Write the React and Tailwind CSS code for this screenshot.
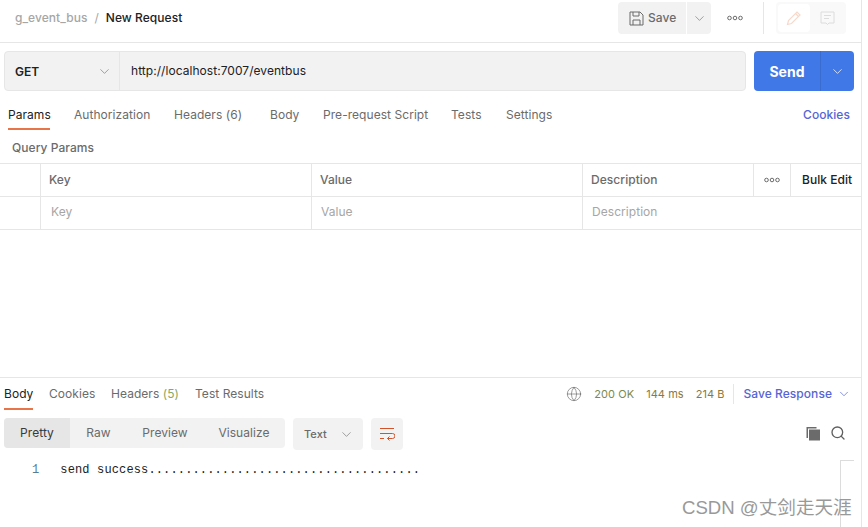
import React from "react";
import { ChevronDown, Globe, Search } from "lucide-react";

const Dots = () => (
  <svg width="16" height="6" viewBox="0 0 16 6" fill="none" stroke="#6b6b6b" strokeWidth="1">
    <circle cx="2.5" cy="3" r="1.8" />
    <circle cx="8" cy="3" r="1.8" />
    <circle cx="13.5" cy="3" r="1.8" />
  </svg>
);

export default function App() {
  const reqTabs = [
    ["Params", "w-[74px] pl-2"],
    ["Authorization", "w-[100px]"],
    ["Headers (6)", "w-[96px]"],
    ["Body", "w-[53px]"],
    ["Pre-request Script", "w-[128px]"],
    ["Tests", "w-[55px]"],
    ["Settings", "w-[60px]"],
  ];

  return (
    <div className="w-[868px] h-[527px] bg-white overflow-hidden font-['Inter',sans-serif] text-[12px] tracking-[0.05px] text-[#6b6b6b] relative">
      <div className="w-[862px] h-full border-r border-[#e6e6e6] flex flex-col">
        {/* top bar */}
        <div className="h-[43px] shrink-0 border-b border-[#e6e6e6] flex items-center pl-[15px] pb-[6px]">
          <span className="text-[#a6a6a6] font-medium">g_event_bus</span>
          <span className="text-[#a6a6a6] ml-[7px]">/</span>
          <span className="text-[#212121] font-medium ml-[7px]">New Request</span>
          <div className="ml-auto flex items-center h-[32px]">
            <div className="w-[68px] h-[32px] bg-[#f2f2f2] rounded-l flex items-center pl-[11px] gap-[4px]">
              <svg width="15" height="15" viewBox="0 0 15 15" fill="none" stroke="#6b6b6b" strokeWidth="1">
                <path d="M1 1h10l3 3v10H1z" />
                <path d="M4 1v4h6V1M4 14V9h7v5" />
              </svg>
              <span className="font-medium text-[#6b6b6b]">Save</span>
            </div>
            <div className="w-[24px] h-[32px] ml-px bg-[#f2f2f2] rounded-r flex items-center justify-center">
              <ChevronDown size={15} strokeWidth={1} color="#6b6b6b" />
            </div>
            <div className="w-[52px] pr-[4px] flex justify-center"><Dots /></div>
            <div className="w-px h-[32px] bg-[#e6e6e6] mr-[12px]"></div>
            <div className="w-[70px] h-[32px] bg-[#f9f9f9] rounded flex items-center p-[2px] mr-[15px]">
              <div className="w-[32px] h-[28px] bg-white rounded flex items-center justify-center">
                <svg width="16" height="16" viewBox="0 0 16 16" fill="none" stroke="#f7d9cc" strokeWidth="1.2">
                  <path d="M1.5 14.5l1-4L11 2l3 3-8.500 8.500z" />
                  <path d="M9.500 3.500l3 3" />
                </svg>
              </div>
              <div className="flex-1 flex items-center justify-center">
                <svg width="15" height="15" viewBox="0 0 15 15" fill="none" stroke="#dcdcdc" strokeWidth="1">
                  <path d="M1 1h13v11H9l-1.500 1.500L6 12H1z" />
                  <path d="M4 4.500h7M4 7.500h5" />
                </svg>
              </div>
            </div>
          </div>
        </div>

        {/* url row */}
        <div className="flex h-[40px] mt-[8px] pl-[4px] pr-[7px] shrink-0">
          <div className="flex-1 flex bg-[#f2f2f2] border border-[#e6e6e6] rounded">
            <div className="w-[115px] border-r border-[#e6e6e6] flex items-center pl-[10px] pr-[7px] justify-between">
              <span className="font-semibold text-[#212121] pt-[2px]">GET</span>
              <ChevronDown size={15} strokeWidth={1} color="#6b6b6b" />
            </div>
            <div className="flex items-center pl-[11px] text-[#212121]">http://localhost:7007/eventbus</div>
          </div>
          <div className="ml-[8px] w-[100px] bg-[#4078e8] rounded flex text-white">
            <div className="w-[67px] flex items-center justify-center border-r border-[#3a6cd0] font-bold text-[14px]">Send</div>
            <div className="flex-1 flex items-center justify-center">
              <ChevronDown size={15} strokeWidth={1.2} color="#ffffff" />
            </div>
          </div>
        </div>

        {/* request tabs */}
        <div className="flex h-[30px] mt-[9px] shrink-0 relative">
          {reqTabs.map(([label, cls], i) => (
            <div key={label} className={`${cls} flex items-center ${i === 0 ? "text-[#212121]" : ""}`}>{label}</div>
          ))}
          <div className="ml-auto pr-[11px] flex items-center text-[#5565d6] font-medium">Cookies</div>
          <div className="absolute left-[8px] bottom-0 w-[42px] h-[2px] bg-[#e8744a]"></div>
        </div>

        <div className="h-[33px] pl-[12px] pt-[2px] flex items-center font-medium shrink-0">Query Params</div>

        {/* params table */}
        <div className="shrink-0 border-t border-[#e6e6e6]">
          <div className="h-[33px] flex border-b border-[#e6e6e6] font-medium">
            <div className="w-[41px] border-r border-[#e6e6e6]"></div>
            <div className="w-[271px] border-r border-[#e6e6e6] flex items-center pl-[8px]">Key</div>
            <div className="w-[271px] border-r border-[#e6e6e6] flex items-center pl-[8px]">Value</div>
            <div className="w-[171px] border-r border-[#e6e6e6] flex items-center pl-[8px]">Description</div>
            <div className="w-[37px] border-r border-[#e6e6e6] flex items-center justify-center"><Dots /></div>
            <div className="flex-1 flex items-center pl-[11px] text-[#212121]">Bulk Edit</div>
          </div>
          <div className="h-[33px] flex border-b border-[#e6e6e6] text-[#a6a6a6]">
            <div className="w-[41px] border-r border-[#e6e6e6]"></div>
            <div className="w-[271px] border-r border-[#e6e6e6] flex items-center pl-[10px] pb-[2px]">Key</div>
            <div className="w-[271px] border-r border-[#e6e6e6] flex items-center pl-[9px] pb-[2px]">Value</div>
            <div className="flex-1 flex items-center pl-[9px] pb-[2px]">Description</div>
          </div>
        </div>

        {/* response */}
        <div className="mt-[147px] flex-1 border-t border-[#e6e6e6] flex flex-col">
          <div className="h-[32px] flex pl-[4px] shrink-0 items-center relative">
            <span className="text-[#212121] w-[45px]">Body</span>
            <span className="w-[62px]">Cookies</span>
            <span className="w-[84px]">Headers <span className="text-[#8aa860]">(5)</span></span>
            <span>Test Results</span>
            <div className="absolute left-[4px] bottom-0 w-[29px] h-[2px] bg-[#e8744a]"></div>
            <div className="ml-auto flex items-center pr-[10px]">
              <Globe size={16} strokeWidth={1} color="#6b6b6b" />
              <span className="ml-[12px] text-[11px] text-[#7a8a50]">200 OK</span>
              <span className="ml-[12px] text-[11px] text-[#8a7a40]">144 ms</span>
              <span className="ml-[12px] text-[11px] text-[#8a7a40]">214 B</span>
              <div className="w-px h-[20px] bg-[#e6e6e6] ml-[8px] mr-[10px]"></div>
              <span className="text-[#5565d6] font-medium">Save Response</span>
              <ChevronDown size={14} strokeWidth={1.2} color="#5565d6" className="ml-[5px]" />
            </div>
          </div>

          <div className="flex items-start pl-[4px] pr-[15px] mt-[8px] shrink-0">
            <div className="w-[281px] h-[30px] bg-[#f2f2f2] rounded flex items-center">
              <div className="w-[66px] h-full bg-[#e6e6e6] rounded-l flex items-center justify-center text-[#3a3a3a]">Pretty</div>
              <div className="w-[57px] text-center">Raw</div>
              <div className="w-[76px] text-center">Preview</div>
              <div className="w-[82px] text-center">Visualize</div>
            </div>
            <div className="w-[70px] h-[32px] ml-[8px] bg-[#f2f2f2] rounded flex items-center pl-[11px] pr-[9px] justify-between font-medium text-[11px]">
              <span>Text</span>
              <ChevronDown size={15} strokeWidth={1} color="#6b6b6b" />
            </div>
            <div className="w-[32px] h-[32px] ml-[8px] bg-[#f2f2f2] rounded flex items-center justify-center">
              <svg width="16" height="14" viewBox="0 0 16 14" fill="none" stroke="#d0532a" strokeWidth="1">
                <path d="M1 1.500h14M1 6.500h12.500a2 2 0 0 1 0 5H8.500M1 11.500h4" />
                <path d="M10.500 9.500l-2 2 2 2" />
              </svg>
            </div>
            <div className="ml-auto flex items-center gap-[9px] h-[30px]">
              <svg width="15" height="15" viewBox="0 0 15 15" fill="#6b6b6b">
                <path d="M0.500 1h10v1.500H2V12H0.500z" />
                <rect x="3" y="3.500" width="11" height="11" />
              </svg>
              <Search size={16} strokeWidth={2} color="#5f5f5f" />
            </div>
          </div>

          <div className="relative flex-1 pl-[32px] pt-[13px]">
            <div className="flex font-['Liberation_Mono',monospace] text-[12px] leading-[14px] tracking-[0.14px] text-[#212121]">
              <span className="text-[#5a7a90]">1</span>
              <span className="ml-[21px]">send success.....................................</span>
            </div>
            <div className="absolute right-[7px] top-[10px] bottom-0 w-[14px] border-l border-t border-[#dcdcdc]"></div>
          </div>
        </div>
      </div>
      <div className="absolute left-[682px] top-[496px] text-[18.6px] leading-[24px] tracking-normal text-[#999999] font-['Liberation_Sans','Noto_Sans_CJK_SC',sans-serif] whitespace-nowrap">CSDN @丈剑走天涯</div>
    </div>
  );
}
